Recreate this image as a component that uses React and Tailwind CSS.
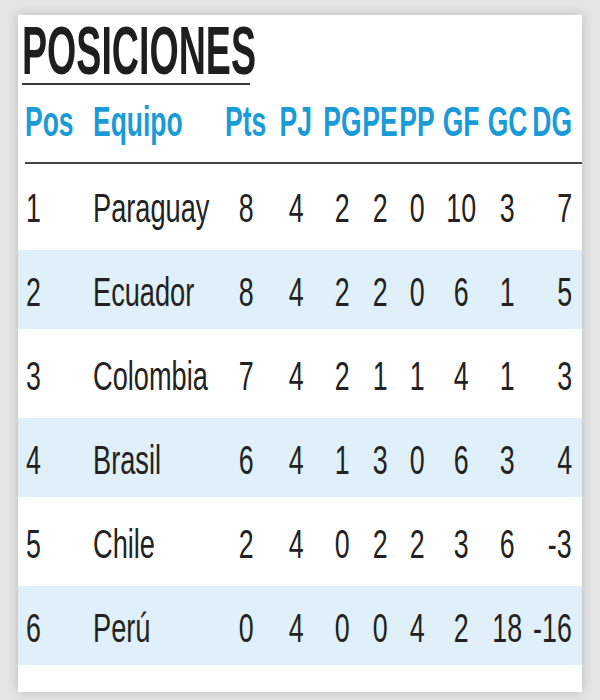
import React from 'react';

const columns = [
    { key: 'pts', label: 'Pts', width: 'w-[50px]' },
    { key: 'pj', label: 'PJ', width: 'w-[50px]' },
    { key: 'pg', label: 'PG', width: 'w-[42px]' },
    { key: 'pe', label: 'PE', width: 'w-[34px]' },
    { key: 'pp', label: 'PP', width: 'w-[40px]' },
    { key: 'gf', label: 'GF', width: 'w-[48px]' },
    { key: 'gc', label: 'GC', width: 'w-[44px]' },
];

const teams = [
    { pos: 1, name: 'Paraguay', pts: 8, pj: 4, pg: 2, pe: 2, pp: 0, gf: 10, gc: 3, dg: 7 },
    { pos: 2, name: 'Ecuador', pts: 8, pj: 4, pg: 2, pe: 2, pp: 0, gf: 6, gc: 1, dg: 5 },
    { pos: 3, name: 'Colombia', pts: 7, pj: 4, pg: 2, pe: 1, pp: 1, gf: 4, gc: 1, dg: 3 },
    { pos: 4, name: 'Brasil', pts: 6, pj: 4, pg: 1, pe: 3, pp: 0, gf: 6, gc: 3, dg: 4 },
    { pos: 5, name: 'Chile', pts: 2, pj: 4, pg: 0, pe: 2, pp: 2, gf: 3, gc: 6, dg: -3 },
    { pos: 6, name: 'Perú', pts: 0, pj: 4, pg: 0, pe: 0, pp: 4, gf: 2, gc: 18, dg: -16 },
];

const font = "font-['Liberation_Sans',Arial,sans-serif]";

const Cell = ({ width, children, header }) => (
    <div className={`${width} flex justify-center`}>
        <span
            className={`inline-block whitespace-nowrap origin-center ${header ? 'scale-x-[0.63]' : 'scale-x-[0.67]'}`}
        >
            {children}
        </span>
    </div>
);

const App = () => {
    return (
        <div className={`min-h-[700px] bg-[#e4e4e4] pt-[15px] pl-[18px] ${font}`}>
            <div className="w-[564px] bg-white pt-[2px] pb-[27px] shadow-[0_0_10px_rgba(0,0,0,0.18)]">
                {/* Title */}
                <div className="ml-[4px] w-[228px] border-b-2 border-[#3a3a3a] h-[68px]">
                    <h1 className="text-[68px] leading-[66px] font-bold text-[#1e1e1e]">
                        <span className="inline-block whitespace-nowrap origin-left scale-x-[0.553]">
                            POSICIONES
                        </span>
                    </h1>
                </div>

                {/* Header */}
                <div className="ml-[7px] pl-[-1px] pt-[16px] pb-[19px] border-b-2 border-[#444] text-[42px] leading-[42px] font-bold text-[#1a9bd7]">
                    <div className="flex">
                        <div className="w-[68px]">
                            <span className="inline-block whitespace-nowrap origin-left scale-x-[0.63]">Pos</span>
                        </div>
                        <div className="w-[128px]">
                            <span className="inline-block whitespace-nowrap origin-left scale-x-[0.63]">Equipo</span>
                        </div>
                        {columns.map((c) => (
                            <Cell key={c.key} width={c.width} header>
                                {c.label}
                            </Cell>
                        ))}
                        <div className="w-[43px] flex justify-end">
                            <span className="inline-block whitespace-nowrap origin-right scale-x-[0.63]">DG</span>
                        </div>
                    </div>
                </div>

                {/* Rows */}
                <div className="mt-[2px] flex flex-col gap-[5px] text-[40px] leading-[40px] text-[#222]">
                    {teams.map((t) => (
                        <div
                            key={t.pos}
                            className={`h-[79px] pt-[4px] pl-[6px] flex items-center ${t.pos % 2 === 0 ? 'bg-[#dff0f9]' : 'bg-white'}`}
                        >
                            <div className="w-[69px]">
                                <span className="inline-block origin-left scale-x-[0.67] pl-[3px]">{t.pos}</span>
                            </div>
                            <div className="w-[128px]">
                                <span className="inline-block whitespace-nowrap origin-left scale-x-[0.68]">{t.name}</span>
                            </div>
                            {columns.map((c) => (
                                <Cell key={c.key} width={c.width}>
                                    {t[c.key]}
                                </Cell>
                            ))}
                            <div className="w-[43px] flex justify-end">
                                <span className="inline-block whitespace-nowrap origin-right scale-x-[0.67]">{t.dg}</span>
                            </div>
                        </div>
                    ))}
                </div>
            </div>
        </div>
    );
};

export default App;
